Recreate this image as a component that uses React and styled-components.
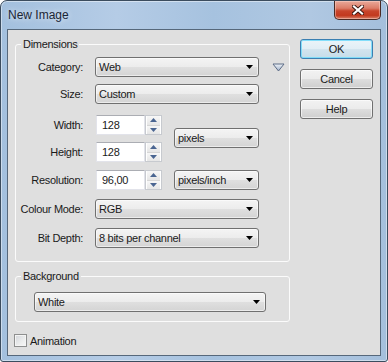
import React from "react";
// Style
import styled, { createGlobalStyle } from "styled-components";

const GlobalStyle = createGlobalStyle`
  html, body {
    margin: 0;
    padding: 0;
  }
  body {
    font-family: "Liberation Sans", Arial, sans-serif;
    background: #ffffff;
  }
  * {
    box-sizing: border-box;
  }
`;

// Icons
const CloseGlyph = () => (
  <svg width="12" height="10" viewBox="0 0 12 10">
    <path d="M2 1.5 L10 8.5 M10 1.5 L2 8.5" stroke="#3a1610" strokeWidth="4" strokeLinecap="square" />
    <path d="M2 1.5 L10 8.5 M10 1.5 L2 8.5" stroke="#ffffff" strokeWidth="2.2" strokeLinecap="square" />
  </svg>
);

const DropArrow = () => (
  <svg width="7" height="4" viewBox="0 0 7 4">
    <polygon points="0,0 7,0 3.5,4" fill="#000000" />
  </svg>
);

const MenuTriangle = () => (
  <svg width="13" height="9" viewBox="0 0 13 9">
    <defs>
      <linearGradient id="tri" x1="0" y1="0" x2="0" y2="1">
        <stop offset="0" stopColor="#eef2f8" />
        <stop offset="1" stopColor="#9fb0c8" />
      </linearGradient>
    </defs>
    <polygon points="1,1 12,1 6.5,8" fill="url(#tri)" stroke="#5d6c86" strokeWidth="1" strokeLinejoin="round" />
  </svg>
);

const SpinArrow = ({ down }) => (
  <svg width="7" height="4" viewBox="0 0 7 4">
    <polygon points={down ? "0,0 7,0 3.5,4" : "0,4 7,4 3.5,0"} fill="#4a6591" />
  </svg>
);

const App = () => {
  return (
    <>
      <GlobalStyle />
      <Window>
        <TitleBar>
          <Title>New Image</Title>
          <CloseButton>
            <CloseGlyph />
          </CloseButton>
        </TitleBar>

        <Client>
          <Main>
            <Group>
              <Legend>Dimensions</Legend>
              <FormGrid>
                <FieldLabel $row={1}>Category:</FieldLabel>
                <Select $row={1} $col="2 / 4">
                  <span>Web</span>
                  <DropArrow />
                </Select>
                <IconCell $row={1}>
                  <MenuTriangle />
                </IconCell>

                <FieldLabel $row={2}>Size:</FieldLabel>
                <Select $row={2} $col="2 / 4">
                  <span>Custom</span>
                  <DropArrow />
                </Select>

                <FieldLabel $row={3}>Width:</FieldLabel>
                <NumberField $row={3}>
                  <NumberInput>128</NumberInput>
                  <Spinner>
                    <SpinButton><SpinArrow /></SpinButton>
                    <SpinButton><SpinArrow down /></SpinButton>
                  </Spinner>
                </NumberField>
                <Select $row="3 / 5" $col="3" $offset={13}>
                  <span>pixels</span>
                  <DropArrow />
                </Select>

                <FieldLabel $row={4}>Height:</FieldLabel>
                <NumberField $row={4}>
                  <NumberInput>128</NumberInput>
                  <Spinner>
                    <SpinButton><SpinArrow /></SpinButton>
                    <SpinButton><SpinArrow down /></SpinButton>
                  </Spinner>
                </NumberField>

                <FieldLabel $row={5}>Resolution:</FieldLabel>
                <NumberField $row={5}>
                  <NumberInput>96,00</NumberInput>
                  <Spinner>
                    <SpinButton><SpinArrow /></SpinButton>
                    <SpinButton><SpinArrow down /></SpinButton>
                  </Spinner>
                </NumberField>
                <Select $row={5} $col="3">
                  <span>pixels/inch</span>
                  <DropArrow />
                </Select>

                <FieldLabel $row={6}>Colour Mode:</FieldLabel>
                <Select $row={6} $col="2 / 4">
                  <span>RGB</span>
                  <DropArrow />
                </Select>

                <FieldLabel $row={7}>Bit Depth:</FieldLabel>
                <Select $row={7} $col="2 / 4">
                  <span>8 bits per channel</span>
                  <DropArrow />
                </Select>
              </FormGrid>
            </Group>

            <BackgroundGroup>
              <Legend>Background</Legend>
              <Select $wide>
                <span>White</span>
                <DropArrow />
              </Select>
            </BackgroundGroup>

            <CheckRow>
              <CheckBox />
              <span>Animation</span>
            </CheckRow>
          </Main>

          <Buttons>
            <Button $primary>OK</Button>
            <Button>Cancel</Button>
            <Button>Help</Button>
          </Buttons>
        </Client>
      </Window>
    </>
  );
};

export default App;

const Window = styled.div`
  width: 388px;
  height: 362px;
  display: flex;
  flex-direction: column;
  border: 1px solid #3b4c5e;
  border-radius: 7px 7px 3px 3px;
  padding: 0 6px 5px;
  overflow: hidden;
  background: linear-gradient(
    90deg,
    #a3c0de 0%,
    #b5cce6 30%,
    #a6c2df 55%,
    #b0c8e2 80%,
    #a4bfdc 100%
  );
  box-shadow: inset 0 0 0 1px rgba(255, 255, 255, 0.45);
`;

const TitleBar = styled.div`
  height: 28px;
  display: flex;
  justify-content: space-between;
  align-items: flex-start;
`;

const Title = styled.div`
  padding: 7px 0 0 1px;
  font-size: 12px;
  line-height: 14px;
  color: #1b2636;
  text-shadow: 0 0 6px rgba(255, 255, 255, 0.8);
`;

const CloseButton = styled.div`
  width: 47px;
  height: 19px;
  display: flex;
  align-items: center;
  justify-content: center;
  border: 1px solid #4a2a24;
  border-top: none;
  border-radius: 0 0 5px 5px;
  background: linear-gradient(
    180deg,
    #e9a99a 0%,
    #dc7d68 40%,
    #c8452c 55%,
    #c2391f 80%,
    #d8826a 100%
  );
  box-shadow: inset 0 0 0 1px rgba(255, 220, 210, 0.45);
`;

const Client = styled.div`
  flex: 1;
  display: flex;
  gap: 10px;
  padding: 0 7px;
  background: #dfdfdf;
  border: 1px solid #56687b;
`;

const Main = styled.div`
  width: 275px;
  padding-top: 8px;
  display: flex;
  flex-direction: column;
`;

const Group = styled.fieldset`
  margin: 0;
  padding: 6px 0 13px 0;
  border: 1px solid #fbfbfb;
  border-radius: 3px;
  min-width: 0;
`;

const BackgroundGroup = styled(Group)`
  margin-top: 8px;
  padding: 9px 0 9px 0;
`;

const Legend = styled.legend`
  margin-left: 5px;
  padding: 0 2px;
  font-size: 11px;
  line-height: 13px;
  letter-spacing: -0.3px;
  color: #1a1a1a;
`;

const FormGrid = styled.div`
  display: grid;
  grid-template-columns: 67px 67px 85px 13px;
  grid-template-rows: 27px 31px 27px 28px 29px 29px 20px;
  column-gap: 12px;
`;

const FieldLabel = styled.div`
  grid-column: 1;
  grid-row: ${(p) => p.$row};
  align-self: start;
  text-align: right;
  font-size: 11px;
  line-height: 20px;
  letter-spacing: -0.3px;
  color: #1a1a1a;
  white-space: nowrap;
`;

const Select = styled.div`
  grid-column: ${(p) => p.$col || "auto"};
  grid-row: ${(p) => p.$row || "auto"};
  align-self: start;
  margin-top: ${(p) => p.$offset || 0}px;
  margin-left: ${(p) => (p.$wide ? "18px" : "0")};
  width: ${(p) => (p.$wide ? "232px" : "auto")};
  height: 20px;
  display: flex;
  align-items: center;
  justify-content: space-between;
  padding: 0 5px 0 3px;
  border: 1px solid #707070;
  border-radius: 3px;
  background: linear-gradient(
    180deg,
    #f4f4f4 0%,
    #ececec 50%,
    #dfdfdf 52%,
    #d4d4d4 100%
  );
  box-shadow: inset 0 0 0 1px rgba(255, 255, 255, 0.55);
  font-size: 11px;
  letter-spacing: -0.3px;
  color: #1a1a1a;
  white-space: nowrap;
`;

const IconCell = styled.div`
  grid-column: 4;
  grid-row: ${(p) => p.$row};
  align-self: start;
  margin: 6px 0 0 1px;
  line-height: 0;
`;

const NumberField = styled.div`
  grid-column: 2;
  grid-row: ${(p) => p.$row};
  align-self: start;
  height: 20px;
  display: flex;
`;

const NumberInput = styled.div`
  flex: 1;
  margin-left: 1px;
  padding-left: 5px;
  background: #ffffff;
  border: 1px solid #e2e3ea;
  border-top-color: #abadb3;
  font-size: 11px;
  line-height: 18px;
  letter-spacing: -0.3px;
  color: #1a1a1a;
`;

const Spinner = styled.div`
  width: 17px;
  display: flex;
  flex-direction: column;
  border: 1px solid #c7cacf;
  background: #ffffff;
`;

const SpinButton = styled.div`
  flex: 1;
  display: flex;
  align-items: center;
  justify-content: center;
  margin: 0 1px;
  background: linear-gradient(180deg, #f7f7f7, #e6e6e6);
  border-bottom: 1px solid #d6d6d6;
  &:last-child {
    border-bottom: none;
  }
`;

const CheckRow = styled.div`
  margin: 12px 0 0 -1px;
  display: flex;
  align-items: center;
  gap: 3px;
  font-size: 11px;
  letter-spacing: -0.3px;
  color: #1a1a1a;
`;

const CheckBox = styled.div`
  width: 13px;
  height: 13px;
  border: 1px solid #8e8f8f;
  background: linear-gradient(135deg, #d2d5da 0%, #eceded 60%, #f7f7f7 100%);
  box-shadow: inset 0 0 0 1px #f4f4f4;
`;

const Buttons = styled.div`
  width: 73px;
  padding-top: 9px;
  display: flex;
  flex-direction: column;
  gap: 10px;
`;

const Button = styled.div`
  height: 20px;
  display: flex;
  align-items: center;
  justify-content: center;
  border: 1px solid ${(p) => (p.$primary ? "#3c7fb1" : "#707070")};
  border-radius: 3px;
  background: ${(p) =>
    p.$primary
      ? "linear-gradient(180deg, #eaf4f9 0%, #e1eef5 50%, #d2e4ee 52%, #c6dde9 100%)"
      : "linear-gradient(180deg, #f2f2f2 0%, #ebebeb 50%, #dddddd 52%, #cfcfcf 100%)"};
  box-shadow: inset 0 0 0 1px
    ${(p) => (p.$primary ? "rgba(120, 220, 250, 0.9)" : "rgba(255, 255, 255, 0.6)")};
  font-size: 11px;
  letter-spacing: -0.3px;
  color: #1a1a1a;
`;
